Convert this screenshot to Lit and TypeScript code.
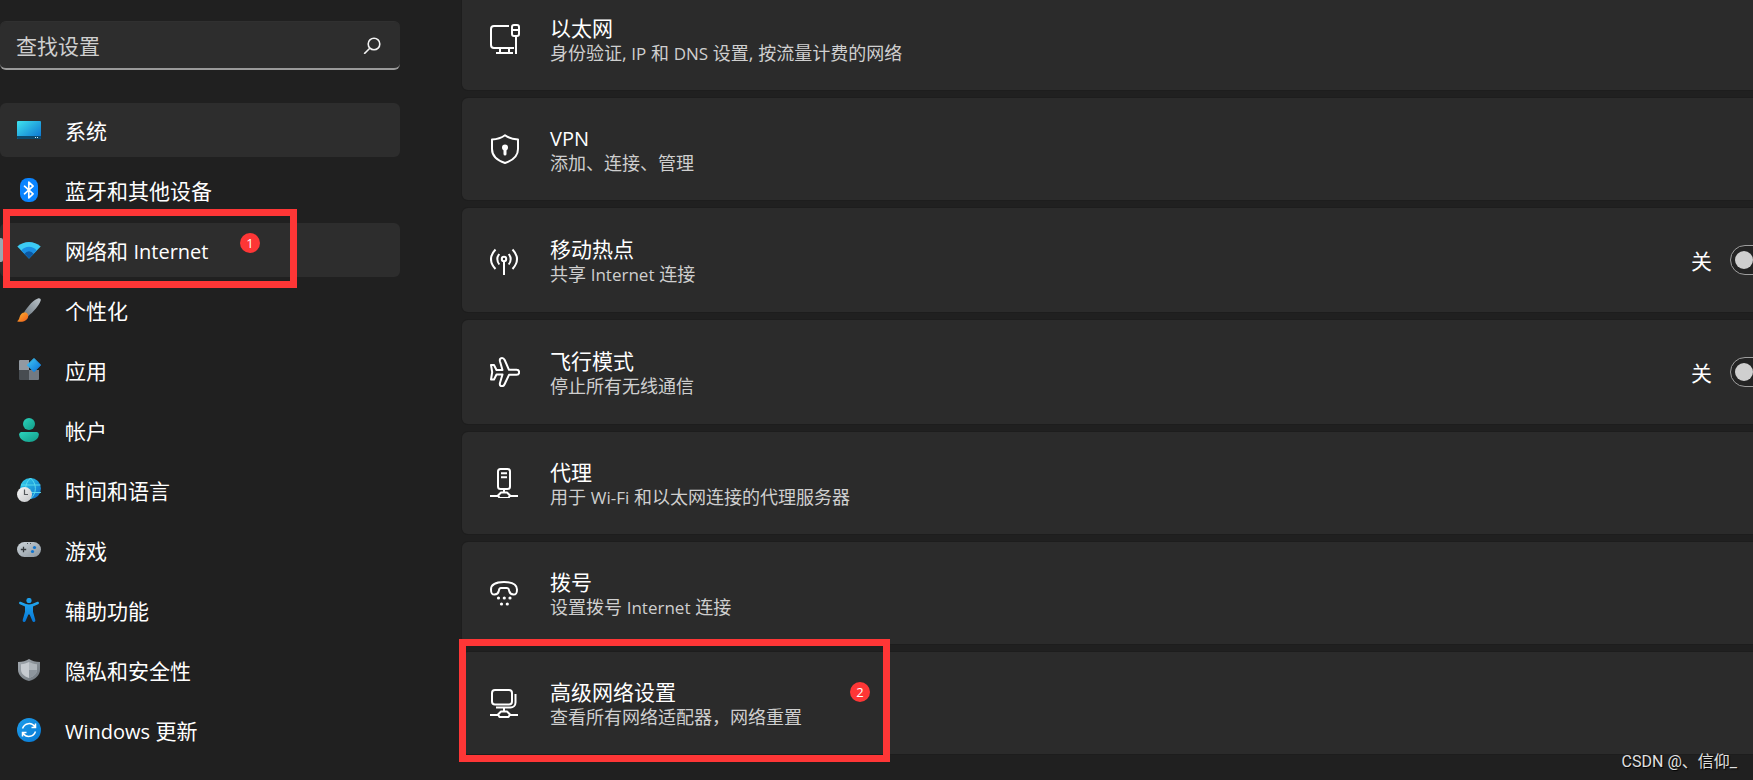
import { LitElement, html, css, svg, nothing, TemplateResult, SVGTemplateResult } from "lit";
import { customElement, property } from "lit/decorators.js";

/** Splits a label so that Latin words can be set a little smaller beside the ideographs. */
const label = (text: string) =>
  text
    .split(/([A-Za-z][A-Za-z-]*)/)
    .map((part) => (/^[A-Za-z]/.test(part) ? html`<span class="latin">${part}</span>` : part));

const textStyles = css`
  * {
    box-sizing: border-box;
  }
  .latin {
    font-size: 20px;
  }
  .detail .latin {
    font-size: 17px;
  }
`;

const navIcons: Record<string, SVGTemplateResult> = {
  system: svg`
    <defs><linearGradient id="g" x1="0" y1="0" x2="1" y2="1"><stop offset="0" stop-color="#3fe3ee"/><stop offset="1" stop-color="#0a6fd0"/></linearGradient></defs>
    <rect x="0" y="3" width="24" height="18" rx="1" fill="url(#g)"/>
    <path d="M0 18h24v2a1 1 0 0 1-1 1H1a1 1 0 0 1-1-1z" fill="#0c4a6e"/>
    <path d="M18 19h1v1h-1zM20 19h1v1h-1z" fill="#cfe8f5"/>`,
  bluetooth: svg`
    <rect x="3" y="0" width="18" height="24" rx="8" fill="#0a84ff"/>
    <path d="M7.5 8.2l8.6 7.6-4.3 4V4.2l4.3 4-8.6 7.6" fill="none" stroke="#fff" stroke-width="1.7" stroke-linejoin="round" stroke-linecap="round"/>`,
  network: svg`
    <path d="M12 20.500L0.300 8.600Q5.400 4 12 4t11.700 4.600z" fill="#3ccbf4"/>
    <path d="M12 20.500L4.200 12.500Q7.500 8.800 12 8.800t7.800 3.700z" fill="#1a8fe3"/>
    <path d="M12 20.500L7.400 15.700Q9.300 13.200 12 13.200t4.600 2.500z" fill="#0c59a4"/>`,
  brush: svg`
    <defs>
      <linearGradient id="h" x1="0" y1="1" x2="1" y2="0"><stop offset="0" stop-color="#6c7780"/><stop offset="1" stop-color="#bcc5cb"/></linearGradient>
      <linearGradient id="b" x1="0" y1="0" x2="1" y2="1"><stop offset="0" stop-color="#ffb52e"/><stop offset="1" stop-color="#ef5b1c"/></linearGradient>
    </defs>
    <path d="M7 14.500C11 8 17 1.500 21.500 0.300c1.600-.3 2.600.9 2.200 2.300C22.500 7 16.500 14 10.800 18.500z" fill="url(#h)"/>
    <path d="M0 23.200c1.700-.7 2-2.200 2.600-4.200C3.400 16 6 13.700 8.700 14.600c2.700 1 3.300 4 1.500 6.300C7.700 24 3 24.400 0 23.200z" fill="url(#b)"/>`,
  apps: svg`
    <defs><linearGradient id="a" x1="0" y1="0" x2="1" y2="1"><stop offset="0" stop-color="#40c8f5"/><stop offset="1" stop-color="#0a6fd6"/></linearGradient></defs>
    <path d="M3 2h9v10H2V3a1 1 0 0 1 1-1z" fill="#9299a1"/>
    <path d="M2 12h10v10H3a1 1 0 0 1-1-1z" fill="#474c51"/>
    <path d="M12 12h10v9a1 1 0 0 1-1 1h-9z" fill="#737a82"/>
    <path d="M17 .4l6.700 6.700L17 13.800 10.300 7.100z" fill="url(#a)" stroke="url(#a)" stroke-linejoin="round"/>`,
  account: svg`
    <defs><linearGradient id="p" x1="0" y1="0" x2="1" y2="1"><stop offset="0" stop-color="#2bd4bd"/><stop offset="1" stop-color="#129a86"/></linearGradient></defs>
    <circle cx="12" cy="6" r="6" fill="url(#p)"/>
    <path d="M4.500 14h15c1.400 0 2.300 1 2.300 2.300C21.800 21 17.500 24 12 24S2.200 21 2.200 16.300C2.200 15 3.100 14 4.500 14z" fill="url(#p)"/>`,
  time: svg`
    <defs>
      <linearGradient id="t" x1="0" y1="0" x2="1" y2="1"><stop offset="0" stop-color="#35d6ee"/><stop offset="1" stop-color="#0868c8"/></linearGradient>
      <linearGradient id="c" x1="0" y1="0" x2="1" y2="1"><stop offset="0" stop-color="#f7f7f7"/><stop offset="1" stop-color="#c4c6c8"/></linearGradient>
    </defs>
    <circle cx="13.500" cy="10.500" r="10.500" fill="url(#t)"/>
    <path d="M4 7h19.500M10 14.500h14M13.500 0C7 6 7 15 13.500 21M13.500 0c6.500 6 6.500 15 0 21" fill="none" stroke="#5fe0ef" stroke-width=".9"/>
    <circle cx="7.500" cy="16.500" r="7.500" fill="url(#c)"/>
    <path d="M7.500 11.500V16.500h3.500" fill="none" stroke="#55595c" stroke-width="1.200"/>`,
  game: svg`
    <defs><linearGradient id="q" x1="0" y1="0" x2="1" y2="1"><stop offset="0" stop-color="#cdd5db"/><stop offset="1" stop-color="#8a949c"/></linearGradient></defs>
    <rect x="0" y="4" width="24" height="15" rx="7.500" fill="url(#q)"/>
    <path d="M3.800 11.500h5.400M6.500 8.800v5.400" stroke="#33383c" stroke-width="1.300"/>
    <circle cx="17.500" cy="9.500" r="1.600" fill="#0f74cf"/><circle cx="15.500" cy="13.500" r="1.600" fill="#0f74cf"/>
    <path d="M10 5h1v1h-1zM13 5h1v1h-1z" fill="#4a5156"/>`,
  accessibility: svg`
    <defs><linearGradient id="x" x1="0" y1="0" x2="0" y2="1"><stop offset="0" stop-color="#22a7ee"/><stop offset="1" stop-color="#0676d6"/></linearGradient></defs>
    <circle cx="12" cy="2.500" r="2.600" fill="#1d9ee9"/>
    <path d="M3.600 3.800L9 6q3 .9 6 0l5.400-2.200c1.600-.5 2.200 1.900.7 2.500L16 8.600v5.200l2.300 8.300c.3 1.900-2.200 2.500-2.900.9L12.600 16.500h-1.200L8.600 23c-.7 1.600-3.200 1-2.900-.9L8 13.800V8.600L2.900 6.300c-1.500-.6-.9-3 .7-2.500z" fill="url(#x)"/>`,
  shield: svg`
    <defs><linearGradient id="s" x1="0" y1="0" x2="1" y2="1"><stop offset="0" stop-color="#a4abb1"/><stop offset="1" stop-color="#6d757c"/></linearGradient></defs>
    <path d="M12 1c3 1.900 6.500 2.800 11 3v7.500c0 5.500-4 9.500-11 11.500C5 21 1 17 1 11.500V4c4.500-.2 8-1.100 11-3z" fill="url(#s)"/>
    <path d="M12 4c2.500 1.300 5 2 8 2.200v5.300c0 4-2.800 6.800-8 8.500z" fill="#aeb5bb"/>
    <path d="M12 4C9.500 5.300 7 6 4 6.200v5.300c0 4 2.800 6.800 8 8.500z" fill="#c6cbd0"/>
    <path d="M12 12h8c-.2 3.800-3 6.400-8 8z" fill="#8d959c"/>`,
  update: svg`
    <defs><linearGradient id="u" x1="0" y1="0" x2="1" y2="1"><stop offset="0" stop-color="#1e9dea"/><stop offset="1" stop-color="#0678d4"/></linearGradient></defs>
    <circle cx="12" cy="12" r="12" fill="url(#u)"/>
    <path d="M5.500 10.500C7.500 4.800 14.500 3.800 18 8.800M18.500 5.500v4h-4M18.500 13.500C16.500 19.200 9.500 20.200 6 15.200M5.500 18.500v-4h4" fill="none" stroke="#fff" stroke-width="1.500"/>`,
};

const cardIcons: Record<string, SVGTemplateResult> = {
  ethernet: svg`
    <path d="M19 2H4a3 3 0 0 0-3 3v16a3 3 0 0 0 3 3h20M10 24v5M19 24v5M6 29h17M26 13v17"/>
    <rect x="22" y="1" width="7" height="11" rx="2"/><path d="M22 6h7"/>`,
  vpn: svg`
    <path d="M15 1.200c3.500 2.600 7.500 4 13 4.300v9.500c0 6.800-4.500 11.200-13 14C6.500 26.200 2 21.800 2 15V5.500c5.500-.3 9.500-1.700 13-4.300z"/>
    <circle cx="15" cy="13.500" r="3" fill="#fff" stroke="none"/><path d="M15 14v6" stroke-width="3" stroke-linecap="round"/>`,
  hotspot: svg`
    <circle cx="14" cy="14" r="2.200"/>
    <path d="M14 16.500V30M9.300 9q-4 5 0 10.500M18.700 9q4 5 0 10.500M5.500 4.500q-9 9.500 0 19.500M22.500 4.500q9 9.500 0 19.500"/>`,
  airplane: svg`
    <path d="M12.500 13L10 4.500C9.500 2.500 10 1 12 1c1.500 0 2 .6 2.700 2L19 12.800h7.500c3.500 0 3.500 5 0 5H19L14.700 27c-.7 1.600-1.200 2.200-2.700 2.200-2 0-2.500-1.500-2-3.500L12.500 17.500H6.500L4 22.500H1L2.200 15.200 1 8h3l2.500 5z"/>`,
  proxy: svg`
    <rect x="8" y="1" width="12" height="20" rx="2.500"/><path d="M11 5.200h6M11 9.200h6M14 21v3M0 28h8M20 28h8M11 24.500h6l3 3-1.500 2.500h-9L8 27.500z"/>`,
  dialup: svg`
    <path d="M14 4C6 4 1 6.500 1 11.500c0 4 1 5 3.500 5 2.800 0 3.700-.8 4.200-3.200C9 11 9.500 10 11 10h6c1.500 0 2 1 2.300 3.300.5 2.400 1.400 3.200 4.200 3.200 2.500 0 3.500-1 3.500-5C27 6.500 22 4 14 4z"/>
    <g fill="#fff" stroke="none"><circle cx="8.500" cy="20" r="1.600"/><circle cx="14.300" cy="20" r="1.600"/><circle cx="20" cy="20" r="1.600"/><circle cx="11.500" cy="26" r="1.600"/><circle cx="17.300" cy="26" r="1.600"/></g>`,
  advanced: svg`
    <rect x="2" y="2" width="20" height="14.500" rx="3"/><path d="M25.500 6v8.500a5 5 0 0 1-5 5H6M14 19.500v4M0 27h8M20 27h8M11 23.500h6l3 3-1.500 2.500h-9L8 26.500z"/>`,
};

@customElement("settings-nav-item")
class SettingsNavItem extends LitElement {
  @property() icon = "";
  @property() text = "";
  @property() marker = "";
  @property({ type: Boolean }) hovered = false;
  @property({ type: Boolean }) current = false;

  static styles = [
    textStyles,
    css`
      :host {
        display: block;
        position: relative;
      }
      .link {
        display: flex;
        align-items: center;
        gap: 24px;
        height: 54px;
        padding: 0 17px;
        border-radius: 6px;
        color: #fff;
        text-decoration: none;
        position: relative;
        overflow: hidden;
      }
      .link:hover,
      .filled {
        background: #2d2d2d;
      }
      .current::before {
        content: "";
        position: absolute;
        left: 0;
        top: 15px;
        width: 3px;
        height: 24px;
        border-radius: 0 2px 2px 0;
        background: #9aa7af;
      }
      .icon {
        flex: none;
        width: 24px;
        height: 24px;
      }
      .text {
        padding-top: 2px;
      }
      .frame {
        position: absolute;
        left: 3px;
        top: -14px;
        width: 294px;
        height: 79px;
        border: 7px solid #fe3636;
        pointer-events: none;
      }
      .badge {
        position: absolute;
        left: 240px;
        top: 10px;
        width: 20px;
        border-radius: 50%;
        background: #fe3636;
        font-size: 13px;
        line-height: 20px;
        text-align: center;
      }
    `,
  ];

  render() {
    const filled = this.hovered || this.current;
    return html`
      <a
        class="link ${filled ? "filled" : ""} ${this.current ? "current" : ""}"
        href="#${this.icon}"
        aria-current=${this.current ? "page" : nothing}
      >
        <svg class="icon" viewBox="0 0 24 24" aria-hidden="true">${navIcons[this.icon]}</svg>
        <span class="text">${label(this.text)}</span>
      </a>
      ${this.marker ? html`<div class="frame"></div><span class="badge">${this.marker}</span>` : nothing}
    `;
  }
}

@customElement("settings-card")
class SettingsCard extends LitElement {
  @property() icon = "";
  @property() heading = "";
  @property() detail = "";
  @property() marker = "";
  @property({ type: Boolean }) toggle = false;

  static styles = [
    textStyles,
    css`
      :host {
        display: block;
        position: relative;
      }
      .card {
        display: flex;
        align-items: center;
        gap: 30px;
        min-height: 102px;
        width: 100%;
        padding: 0 63px 0 28px;
        box-shadow: 0 0 0 1px #1d1d1d;
        border-radius: 6px;
        background: #2b2b2b;
        color: #fff;
        text-decoration: none;
      }
      .tall {
        min-height: 104px;
      }
      .icon {
        flex: none;
        width: 30px;
        height: 30px;
        fill: none;
        stroke: #fff;
        stroke-width: 2;
        stroke-linejoin: round;
      }
      .copy {
        flex: 1;
        display: flex;
        flex-direction: column;
        padding-top: 4px;
      }
      .heading {
        line-height: 25px;
      }
      .detail {
        font-size: 18px;
        line-height: 25px;
        color: #cfcfcf;
      }
      .state {
        display: flex;
        align-items: center;
        gap: 18px;
      }
      .word {
        padding-top: 2px;
      }
      .switch {
        appearance: none;
        width: 60px;
        height: 30px;
        margin: 0;
        padding: 0 4px;
        display: flex;
        align-items: center;
        border: 1px solid #9e9e9e;
        border-radius: 15px;
        background: #242424;
      }
      .switch::before {
        content: "";
        width: 18px;
        height: 18px;
        border-radius: 50%;
        background: #cfcfcf;
      }
      .switch:checked {
        justify-content: flex-end;
      }
      .frame {
        position: absolute;
        left: -3px;
        top: -13px;
        width: 431px;
        height: 123px;
        border: 7px solid #fe3636;
        pointer-events: none;
      }
      .badge {
        position: absolute;
        left: 388px;
        top: 30px;
        width: 20px;
        border-radius: 50%;
        background: #fe3636;
        font-size: 13px;
        line-height: 20px;
        text-align: center;
      }
    `,
  ];

  private body(): TemplateResult {
    return html`
      <svg class="icon" viewBox="0 0 30 30" aria-hidden="true">${cardIcons[this.icon]}</svg>
      <span class="copy">
        <span class="heading">${label(this.heading)}</span>
        <span class="detail">${label(this.detail)}</span>
      </span>
    `;
  }

  render() {
    return html`
      ${this.toggle
        ? html`<div class="card tall">
            ${this.body()}
            <label class="state">
              <span class="word">关</span>
              <input class="switch" type="checkbox" role="switch" aria-label=${this.heading} />
            </label>
          </div>`
        : html`<a class="card" href="#${this.icon}">${this.body()}</a>`}
      ${this.marker ? html`<div class="frame"></div><span class="badge">${this.marker}</span>` : nothing}
    `;
  }
}

@customElement("app-root")
class AppRoot extends LitElement {
  static styles = [
    textStyles,
    css`
      :host {
        display: flex;
        position: relative;
        height: 100vh;
        overflow: hidden;
        background: #202020;
        color: #fff;
        font-family: "Open Sans", "Noto Sans CJK SC", sans-serif;
        font-size: 21px;
        line-height: 28px;
      }
      .sidebar {
        flex: none;
        width: 400px;
        padding-top: 21px;
      }
      .search {
        display: flex;
        align-items: center;
        height: 49px;
        margin-bottom: 33px;
        padding: 0 19px 0 16px;
        border: 1px solid #303030;
        border-width: 1px 0 2px;
        border-bottom-color: #9a9a9a;
        border-radius: 6px;
        background: #2d2d2d;
      }
      .query {
        flex: 1;
        min-width: 0;
        padding: 2px 0 0;
        border: 0;
        outline: 0;
        background: none;
        color: #fff;
        font: inherit;
      }
      .query::placeholder {
        color: #cfcfcf;
        opacity: 1;
      }
      .glass {
        flex: none;
        width: 18px;
        height: 18px;
        fill: none;
        stroke: #f2f2f2;
        stroke-width: 1.6;
      }
      .nav {
        display: flex;
        flex-direction: column;
        gap: 6px;
      }
      .main {
        flex: 1;
        min-width: 0;
        padding-left: 62px;
        overflow: hidden;
      }
      .cards {
        display: flex;
        flex-direction: column;
        gap: 8px;
        margin: -12px -100px 0 0;
      }
      .credit {
        position: absolute;
        right: 16px;
        bottom: 8px;
        font-family: Roboto, "Noto Sans CJK SC", sans-serif;
        font-size: 16px;
        line-height: 20px;
        color: #e0e0e0;
        text-shadow: 1px 1px 1px #000;
      }
    `,
  ];

  render() {
    return html`
      <aside class="sidebar">
        <div class="search">
          <input class="query" type="text" placeholder="查找设置" aria-label="查找设置" />
          <svg class="glass" viewBox="0 0 18 18" aria-hidden="true">
            <circle cx="11" cy="8" r="5.800" /><path d="M6.800 12.200L1.200 17.800" />
          </svg>
        </div>
        <nav class="nav">
          <settings-nav-item icon="system" text="系统" hovered></settings-nav-item>
          <settings-nav-item icon="bluetooth" text="蓝牙和其他设备"></settings-nav-item>
          <settings-nav-item icon="network" text="网络和 Internet" marker="1" current></settings-nav-item>
          <settings-nav-item icon="brush" text="个性化"></settings-nav-item>
          <settings-nav-item icon="apps" text="应用"></settings-nav-item>
          <settings-nav-item icon="account" text="帐户"></settings-nav-item>
          <settings-nav-item icon="time" text="时间和语言"></settings-nav-item>
          <settings-nav-item icon="game" text="游戏"></settings-nav-item>
          <settings-nav-item icon="accessibility" text="辅助功能"></settings-nav-item>
          <settings-nav-item icon="shield" text="隐私和安全性"></settings-nav-item>
          <settings-nav-item icon="update" text="Windows 更新"></settings-nav-item>
        </nav>
      </aside>
      <main class="main">
        <div class="cards">
          <settings-card icon="ethernet" heading="以太网" detail="身份验证, IP 和 DNS 设置, 按流量计费的网络"></settings-card>
          <settings-card icon="vpn" heading="VPN" detail="添加、连接、管理"></settings-card>
          <settings-card icon="hotspot" heading="移动热点" detail="共享 Internet 连接" toggle></settings-card>
          <settings-card icon="airplane" heading="飞行模式" detail="停止所有无线通信" toggle></settings-card>
          <settings-card icon="proxy" heading="代理" detail="用于 Wi-Fi 和以太网连接的代理服务器"></settings-card>
          <settings-card icon="dialup" heading="拨号" detail="设置拨号 Internet 连接"></settings-card>
          <settings-card icon="advanced" heading="高级网络设置" detail="查看所有网络适配器，网络重置" marker="2"></settings-card>
        </div>
      </main>
      <div class="credit">CSDN @、信仰_</div>
    `;
  }
}
